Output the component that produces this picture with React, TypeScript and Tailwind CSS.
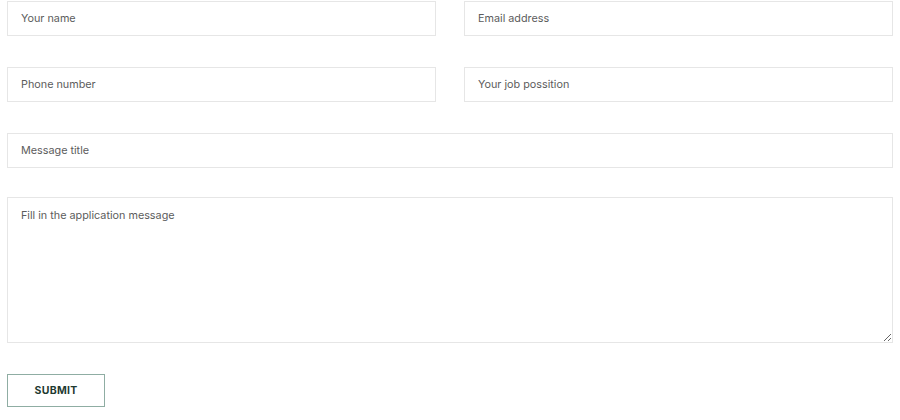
import React from "react";

const inputCls =
  "h-[35px] w-full border border-[#e6e6e6] bg-white px-[13px] font-['Inter',sans-serif] text-[10.8px] text-[#555] placeholder:text-[#5c5c5c] outline-none";

export default function App() {
  return (
    <div
      className="w-[900px] h-[420px] bg-white px-[7px] pt-[1px]"
      style={{ fontFamily: "Inter, 'Noto Sans', sans-serif" }}
    >
      <div className="flex flex-col">
        <div className="grid grid-cols-2 gap-x-[28px] gap-y-[31px]">
          <input className={inputCls} placeholder="Your name" />
          <input className={inputCls} placeholder="Email address" />
          <input className={inputCls} placeholder="Phone number" />
          <input className={inputCls} placeholder="Your job possition" />
        </div>
        <input className={`${inputCls} mt-[31px]`} placeholder="Message title" />
        <textarea
          className="mt-[29px] h-[146px] w-full border border-[#e6e6e6] bg-white px-[13px] pt-[10px] font-['Inter',sans-serif] text-[10.8px] text-[#555] placeholder:text-[#5c5c5c] outline-none"
          placeholder="Fill in the application message"
        />
        <div className="mt-[31px]">
          <button className="h-[33px] w-[98px] border border-[#8fada3] bg-white font-['Inter',sans-serif] text-[10.5px] font-bold tracking-[0.3px] text-[#1f3a31]">
            SUBMIT
          </button>
        </div>
      </div>
    </div>
  );
}
